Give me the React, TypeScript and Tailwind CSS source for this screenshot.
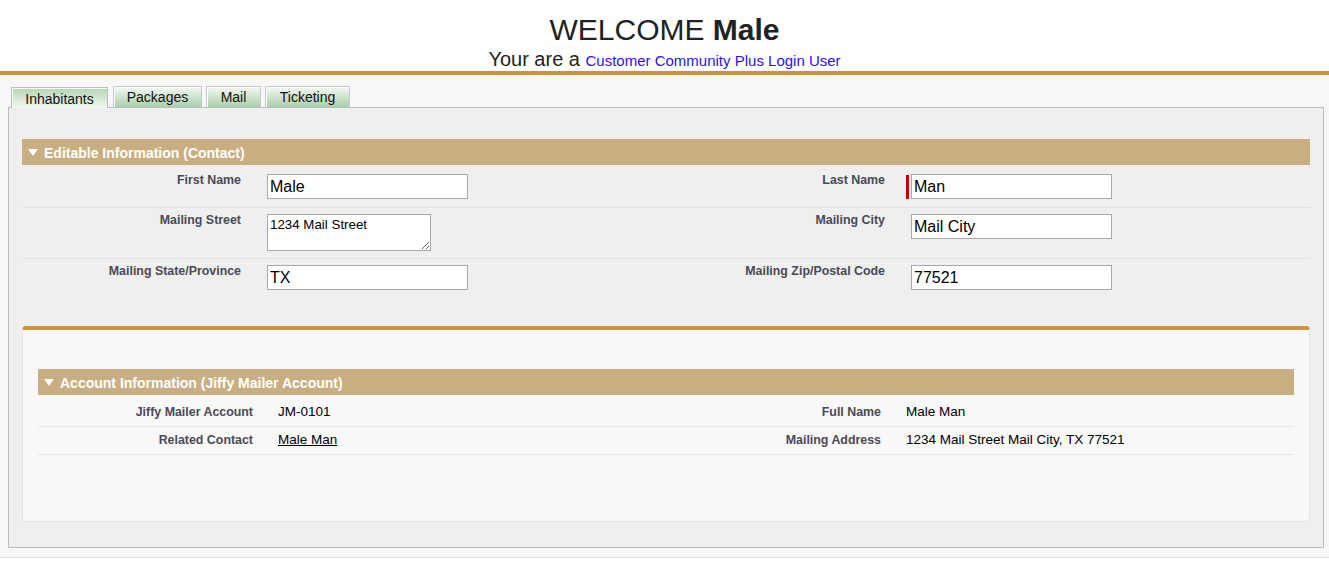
import React from 'react';

const Triangle = () => (
  <svg width="10" height="7" viewBox="0 0 10 7" className="shrink-0">
    <polygon points="0,0 10,0 5,7" fill="#ffffff" />
  </svg>
);

const SectionBar = ({ title }: { title: string }) => (
  <div className="flex h-[26px] items-center bg-[#c9ae81] pl-[6px] text-[14px] font-bold leading-none text-white">
    <Triangle />
    <span className="ml-[6px] pt-px">{title}</span>
  </div>
);

const tabs = [
  { name: 'Inhabitants', w: 'w-[97px]', ml: 'ml-0', active: true },
  { name: 'Packages', w: 'w-[89px]', ml: 'ml-[5px]', active: false },
  { name: 'Mail', w: 'w-[55px]', ml: 'ml-[4px]', active: false },
  { name: 'Ticketing', w: 'w-[85px]', ml: 'ml-[4px]', active: false },
];

const label = 'text-right text-[12.4px] font-bold leading-[15px] text-[#4a4a56]';
const input =
  'block h-[25px] w-[201px] border border-[#a9a9a9] bg-white px-[2px] text-[16px] text-black outline-none';

const EditRow = ({
  row,
  children,
}: {
  row: string;
  children: React.ReactNode;
}) => <div className={`grid grid-cols-[232px_412px_232px_412px] ${row}`}>{children}</div>;

const Field = ({ text }: { text: string }) => <div className={`pr-[13px] ${label}`}>{text}</div>;

const App = () => {
  return (
    <div className="min-h-screen bg-white font-['Liberation_Sans',Arial,sans-serif]">
      <header className="h-[75px] border-b-4 border-[#c9973a] pt-[13px] text-center text-[#222]">
        <div className="text-[30px] leading-[34.5px]">
          WELCOME <b>Male</b>
        </div>
        <div className="text-[20px] leading-[23px]">
          Your are a <a className="cursor-pointer text-[15px] text-[#2b0fff]">Customer Community Plus Login User</a>
        </div>
      </header>

      <div className="border-b border-[#e2e2e2] bg-[#f7f7f7] pb-[9px] pl-[8px] pr-[5px]">
        <div className="flex h-[32px] items-end pl-[3px]">
          {tabs.map((t) =>
            t.active ? (
              <div
                key={t.name}
                className={`relative z-10 -mb-px h-[21px] ${t.w} ${t.ml} border border-b-0 border-[#bdbdbd] bg-linear-to-b from-[#b3d5b3] to-[#f3f8f3] pt-[3px] text-center text-[14px] leading-[16px] text-[#111] shadow-[inset_1px_1px_0_#ffffff]`}
              >
                {t.name}
              </div>
            ) : (
              <div
                key={t.name}
                className={`h-[21px] ${t.w} ${t.ml} border border-b-0 border-[#c8c8c8] bg-linear-to-b from-[#f4f9f4] to-[#a9cfa9] pt-[2px] text-center text-[14px] leading-[16px] text-[#111] shadow-[inset_1px_1px_0_#ffffff]`}
              >
                {t.name}
              </div>
            )
          )}
        </div>

        <div className="border border-[#bdbdbd] bg-[#efefef] pb-[25px] pl-[13px] pr-[13px] pt-[31px]">
          <SectionBar title="Editable Information (Contact)" />

          <EditRow row="border-b border-[#e2e2e2] pt-[8px] pb-[8px]">
            <Field text="First Name" />
            <div className="pl-[13px]">
              <input className={`mt-px ${input}`} defaultValue="Male" />
            </div>
            <Field text="Last Name" />
            <div className="pl-[13px]">
              <div className="relative mt-px">
                <span className="absolute left-[-5px] top-px h-[24px] w-[3px] bg-[#c00]" />
                <input className={input} defaultValue="Man" />
              </div>
            </div>
          </EditRow>

          <EditRow row="border-b border-[#e2e2e2] pt-[5px] pb-[7px]">
            <Field text="Mailing Street" />
            <div className="pl-[13px]">
              <textarea
                className="mt-px block h-[37px] w-[164px] border border-[#a9a9a9] bg-white p-[2px] text-[13.33px] leading-[15px] text-black outline-none"
                defaultValue="1234 Mail Street"
              />
            </div>
            <Field text="Mailing City" />
            <div className="pl-[13px]">
              <input className={`mt-px ${input}`} defaultValue="Mail City" />
            </div>
          </EditRow>

          <EditRow row="pt-[5px] pb-[8px]">
            <Field text="Mailing State/Province" />
            <div className="pl-[13px]">
              <input className={`mt-px ${input}`} defaultValue="TX" />
            </div>
            <Field text="Mailing Zip/Postal Code" />
            <div className="pl-[13px]">
              <input className={`mt-px ${input}`} defaultValue="77521" />
            </div>
          </EditRow>

          <div className="mt-[28px] rounded-[4px] border border-t-4 border-[#e4e4e4] border-t-[#c9973a] bg-[#f8f8f8] px-[15px] pb-[66px] pt-[39px]">
            <SectionBar title="Account Information (Jiffy Mailer Account)" />

            <div className="grid grid-cols-[226px_402px_226px_402px] border-b border-[#e6e6e6] pb-[6px] pt-[9px] leading-[16px]">
              <div className={`pr-[11px] ${label} leading-[16px]`}>Jiffy Mailer Account</div>
              <div className="pl-[14px] text-[13.5px] text-black">JM-0101</div>
              <div className={`pr-[11px] ${label} leading-[16px]`}>Full Name</div>
              <div className="pl-[14px] text-[13.5px] text-black">Male Man</div>
            </div>

            <div className="grid grid-cols-[226px_402px_226px_402px] border-b border-[#e6e6e6] pb-[6px] pt-[5px] leading-[16px]">
              <div className={`pr-[11px] ${label} leading-[16px]`}>Related Contact</div>
              <div className="pl-[14px] text-[13.5px] text-black">
                <a className="cursor-pointer underline">Male Man</a>
              </div>
              <div className={`pr-[11px] ${label} leading-[16px]`}>Mailing Address</div>
              <div className="pl-[14px] text-[13.5px] text-black">1234 Mail Street Mail City, TX 77521</div>
            </div>
          </div>
        </div>
      </div>
    </div>
  );
};

export default App;
